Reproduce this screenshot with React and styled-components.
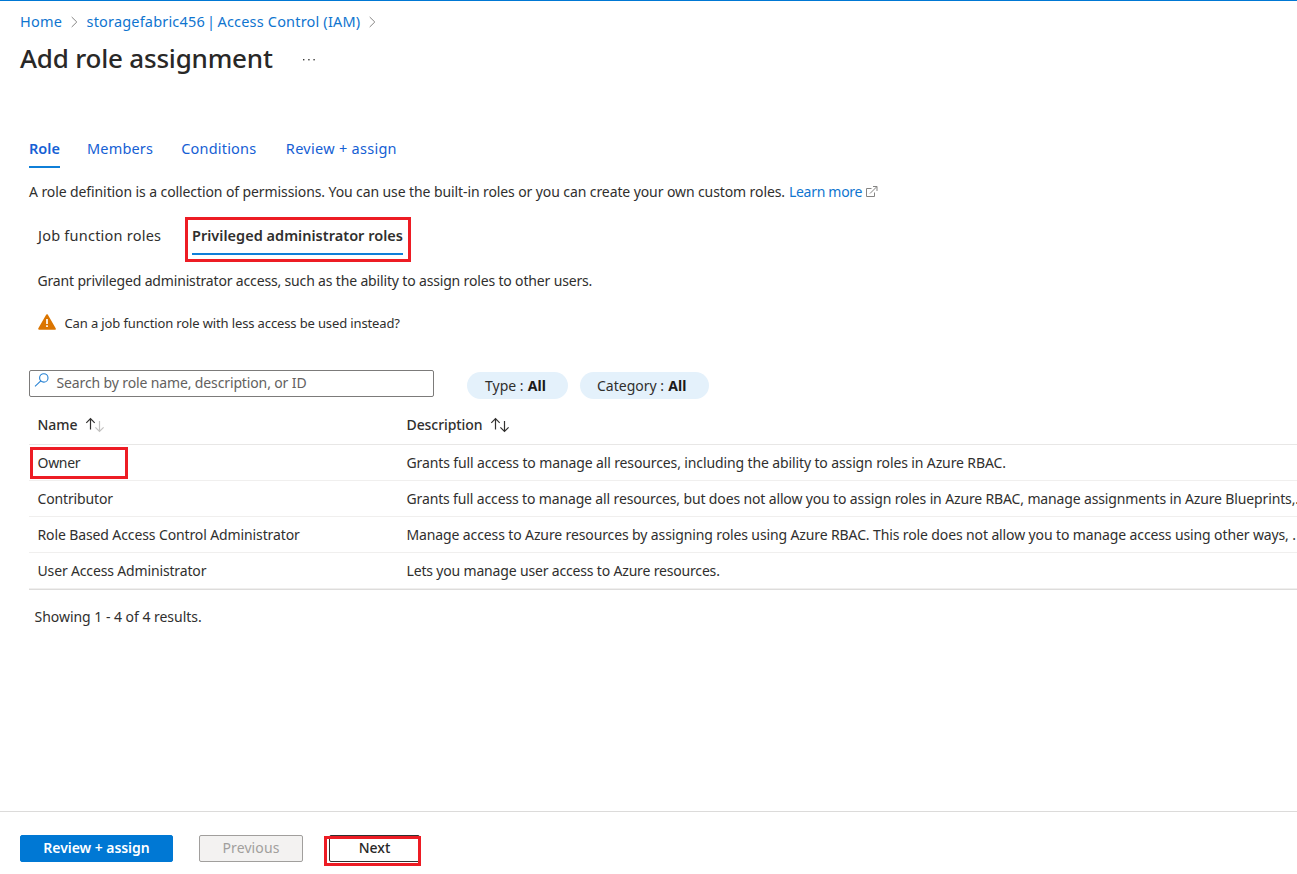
import React from 'react';
import styled, { createGlobalStyle } from 'styled-components';

const GlobalStyle = createGlobalStyle`
  *, *::before, *::after { box-sizing: border-box; }
  body {
    margin: 0;
    background: #fff;
    color: #302f2e;
    font-family: "Noto Sans", "Open Sans", sans-serif;
    font-size: 14px;
    overflow: hidden;
  }
`;

const Page = styled.div`
  display: flex;
  flex-direction: column;
  height: 874px;
  border-top: 1px solid #0078d4;
  overflow: hidden;
  white-space: nowrap;
`;

const Breadcrumb = styled.nav`
  display: flex;
  align-items: center;
  height: 20px;
  margin: 10px 0 0 20px;
  font-size: 14.5px;
`;

const Crumb = styled.a`
  color: #0f75cf;
  letter-spacing: ${(p) => p.$track}px;
`;

const CrumbBar = styled.span`
  margin: 0 -1.5px 0 -2px;
`;

const CrumbArrow = styled.svg`
  width: 7px;
  height: 12px;
  margin: 2px 9px 0 8.5px;
`;

const TitleBar = styled.header`
  display: flex;
  align-items: center;
  height: 36px;
  margin: 9px 0 0 20px;
`;

const Title = styled.h1`
  margin: 0;
  color: #292827;
  font-size: 26px;
  line-height: 36px;
  font-weight: 500;
  letter-spacing: -0.2px;
`;

const MoreIcon = styled.svg`
  width: 14px;
  height: 4px;
  margin: 3px 0 0 29px;
`;

const Main = styled.main`
  flex: 1;
  display: flex;
  flex-direction: column;
  padding: 62px 0 0 29px;
`;

const Tabs = styled.div`
  display: flex;
  gap: 28px;
  height: 30px;
  font-size: 14.5px;
`;

const Tab = styled.a`
  height: 30px;
  line-height: 21px;
  color: #1560d4;
  font-weight: ${(p) => (p.$active ? 600 : 400)};
  border-bottom: 2px solid ${(p) => (p.$active ? '#0f7fd8' : 'transparent')};
  letter-spacing: ${(p) => p.$track}px;

  &:first-child { margin-right: -1px; }
  &:last-child { margin-left: 1.5px; }
`;

const Intro = styled.p`
  display: flex;
  align-items: center;
  gap: 4px;
  height: 20px;
  margin: 13px 0 0;
  letter-spacing: -0.098px;
`;

const LearnMore = styled.a`
  display: flex;
  align-items: center;
  gap: 4px;
  color: #0f75cf;
  letter-spacing: -0.3px;
`;

const ExternalIcon = styled.svg`
  width: 12px;
  height: 12px;
  margin-top: 2px;
`;

const SubTabs = styled.div`
  display: flex;
  height: 45px;
  margin: 16px 0 0 9px;
  font-size: 14.5px;
`;

const SubTab = styled.a`
  width: 147px;
  height: 45px;
  padding-top: 8px;
  line-height: 21px;
  letter-spacing: 0.23px;
`;

const ActiveSubTab = styled.div`
  width: 226px;
  height: 45px;
  padding: 5px 5px 0 4px;
  border: 3px solid #ed1c24;
`;

const ActiveSubTabLabel = styled.a`
  display: block;
  height: 30px;
  line-height: 21px;
  font-weight: 600;
  letter-spacing: 0.02px;
  border-bottom: 2px solid #0f7fd8;
`;

const Hint = styled.p`
  height: 20px;
  line-height: 20px;
  margin: 9px 0 0 8.5px;
  letter-spacing: -0.162px;
`;

const Warning = styled.div`
  display: flex;
  align-items: center;
  gap: 8.5px;
  height: 20px;
  margin: 22px 0 0 9px;
  font-size: 13px;
  letter-spacing: -0.13px;
`;

const WarningIcon = styled.svg`
  width: 18px;
  height: 16px;
  margin-bottom: 2px;
`;

const Filters = styled.div`
  display: flex;
  height: 29px;
  margin-top: 37px;
`;

const SearchBox = styled.div`
  display: flex;
  width: 405px;
  height: 27px;
  padding: 0 4px;
  margin-right: 33px;
  border: 1px solid #7c7b7a;
  border-radius: 2px;
  color: #636160;
  line-height: 24px;
  letter-spacing: -0.13px;
`;

const SearchIcon = styled.svg`
  width: 16px;
  height: 16px;
  margin: 1px 6.5px 0 0;
`;

const Pill = styled.div`
  width: ${(p) => p.$width}px;
  height: 27px;
  margin: 2px 12px 0 0;
  padding-left: ${(p) => p.$inset}px;
  border-radius: 14px;
  background: #e4f1fb;
  line-height: 27px;

  b { font-weight: 700; color: #1b1a19; letter-spacing: 0.1px; margin-left: 0.5px; }
`;

const Table = styled.div`
  border-bottom: 1px solid #dddcdb;
`;

const Row = styled.div`
  display: grid;
  grid-template-columns: 369px 1fr;
  align-items: center;
  height: 36px;
  padding-left: 8.5px;
  border-bottom: 1px solid #f0efee;
`;

const HeadRow = styled(Row)`
  height: 46px;
  padding-top: 5px;
  border-color: #e8e7e6;
`;

const HeadCell = styled.div`
  display: flex;
  align-items: center;
  gap: 7.5px;
  height: 34px;
  font-weight: 500;
  letter-spacing: -0.08px;
`;

const SortArrows = styled.svg`
  width: 20px;
  height: 16px;
  margin-top: 2px;
`;

const Cell = styled.div`
  letter-spacing: ${(p) => p.$track}px;
`;

const MarkedCell = styled.div`
  width: 98px;
  height: 32px;
  margin-left: -7.5px;
  padding-left: 4.5px;
  border: 3px solid #ed1c24;
  line-height: 26px;
  letter-spacing: -0.3px;
`;

const Results = styled.p`
  height: 20px;
  line-height: 20px;
  margin: 17px 0 0 5.5px;
  letter-spacing: -0.03px;
`;

const Footer = styled.footer`
  display: flex;
  align-items: flex-start;
  height: 63px;
  padding: 23px 0 0 20px;
  border-top: 1px solid #dcdbda;
`;

const Button = styled.button`
  width: ${(p) => p.$width}px;
  height: 27px;
  margin-right: ${(p) => p.$gap || 0}px;
  padding: 0 0 2px;
  border: 1px solid #323130;
  border-radius: 2px;
  background: #fff;
  color: #292827;
  font: 500 14px/23px "Noto Sans", sans-serif;
`;

const PrimaryButton = styled(Button)`
  border-color: #0078d4;
  background: #0078d4;
  color: #fff;
  font-weight: 600;
  letter-spacing: -0.05px;
`;

const DisabledButton = styled(Button)`
  border-color: #a19f9d;
  background: #f3f2f1;
  color: #a19f9d;
  font-weight: 400;
  letter-spacing: 0.1px;
`;

const MarkedAction = styled.div`
  position: relative;
  padding-left: 5px;
`;

const Marker = styled.div`
  position: absolute;
  left: 0;
  top: 1px;
  width: 97px;
  height: 30px;
  border: 3px solid #ed1c24;
`;

const Chevron = () => (
  <CrumbArrow viewBox="0 0 7 12" fill="none" stroke="#858483" strokeWidth="1">
    <path d="M.7 1 5.8 6 .7 11" />
  </CrumbArrow>
);

const SortIcon = ({ single }) => (
  <SortArrows viewBox="0 0 20 16" fill="none" strokeWidth="1.2">
    <path d="M5.5 12.5V2M1.3 5.9 5.5 1.7 9.7 5.9" stroke="#323130" />
    <path d="M14.5 4v10.3M10.4 10.3l4.1 4.1 4.1-4.1" stroke={single ? '#c3c2c1' : '#323130'} />
  </SortArrows>
);

const roles = [
  { name: 'Owner', marked: true, track: -0.12, text: 'Grants full access to manage all resources, including the ability to assign roles in Azure RBAC.' },
  { name: 'Contributor', nameTrack: -0.14, track: -0.14, text: 'Grants full access to manage all resources, but does not allow you to assign roles in Azure RBAC, manage assignments in Azure Blueprints,.' },
  { name: 'Role Based Access Control Administrator', nameTrack: -0.115, track: -0.12, text: 'Manage access to Azure resources by assigning roles using Azure RBAC. This role does not allow you to manage access using other ways, .' },
  { name: 'User Access Administrator', nameTrack: -0.15, track: -0.17, text: 'Lets you manage user access to Azure resources.' },
];

export default function App() {
  return (
    <Page>
      <GlobalStyle />
      <Breadcrumb>
        <Crumb $track={0.2}>Home</Crumb>
        <Chevron />
        <Crumb $track={0.18}>storagefabric456 <CrumbBar>|</CrumbBar> Access Control (IAM)</Crumb>
        <Chevron />
      </Breadcrumb>
      <TitleBar>
        <Title>Add role assignment</Title>
        <MoreIcon viewBox="0 0 14 4" fill="#3b3a39">
          <rect x="1" y="1" width="1.4" height="1.4" />
          <rect x="6.2" y="1" width="1.4" height="1.4" />
          <rect x="11.4" y="1" width="1.4" height="1.4" />
        </MoreIcon>
      </TitleBar>

      <Main>
        <Tabs>
          <Tab $active $track={0.04}>Role</Tab>
          <Tab $track={0.17}>Members</Tab>
          <Tab $track={0.2}>Conditions</Tab>
          <Tab $track={0.28}>Review + assign</Tab>
        </Tabs>
        <Intro>
          A role definition is a collection of permissions. You can use the built-in roles or you can create your own custom roles.
          <LearnMore>
            Learn more
            <ExternalIcon viewBox="0 0 12 12" fill="none" stroke="#858483">
              <path d="M5.5 2.5h-5v8h8v-4M4 7.5l6.7-6.7M7 .5h4V5" />
            </ExternalIcon>
          </LearnMore>
        </Intro>

        <SubTabs>
          <SubTab>Job function roles</SubTab>
          <ActiveSubTab>
            <ActiveSubTabLabel>Privileged administrator roles</ActiveSubTabLabel>
          </ActiveSubTab>
        </SubTabs>
        <Hint>Grant privileged administrator access, such as the ability to assign roles to other users.</Hint>
        <Warning>
          <WarningIcon viewBox="0 0 18 16">
            <path d="M9 1.2 16.8 14.8H1.2Z" fill="#db7500" stroke="#db7500" strokeWidth="2" strokeLinejoin="round" />
            <path d="M9 5v5M9 11.3v1.7" stroke="#fff" strokeWidth="1.7" />
          </WarningIcon>
          Can a job function role with less access be used instead?
        </Warning>

        <Filters>
          <SearchBox>
            <SearchIcon viewBox="0 0 16 16" fill="none" stroke="#2580d2" strokeWidth="1.1">
              <circle cx="9.8" cy="5.9" r="4.2" />
              <path d="M6.8 8.9 1 14.4" />
            </SearchIcon>
            Search by role name, description, or ID
          </SearchBox>
          <Pill $width={101} $inset={18}>Type : <b>All</b></Pill>
          <Pill $width={129} $inset={17}>Category : <b>All</b></Pill>
        </Filters>

        <Table>
          <HeadRow>
            <HeadCell>Name <SortIcon single /></HeadCell>
            <HeadCell>Description <SortIcon /></HeadCell>
          </HeadRow>
          {roles.map((role) => (
            <Row key={role.name}>
              {role.marked ? <MarkedCell>{role.name}</MarkedCell> : <Cell $track={role.nameTrack}>{role.name}</Cell>}
              <Cell $track={role.track}>{role.text}</Cell>
            </Row>
          ))}
        </Table>
        <Results>Showing 1 - 4 of 4 results.</Results>
      </Main>

      <Footer>
        <PrimaryButton $width={153} $gap={26}>Review + assign</PrimaryButton>
        <DisabledButton $width={104} $gap={21}>Previous</DisabledButton>
        <MarkedAction>
          <Button $width={91}>Next</Button>
          <Marker />
        </MarkedAction>
      </Footer>
    </Page>
  );
}
